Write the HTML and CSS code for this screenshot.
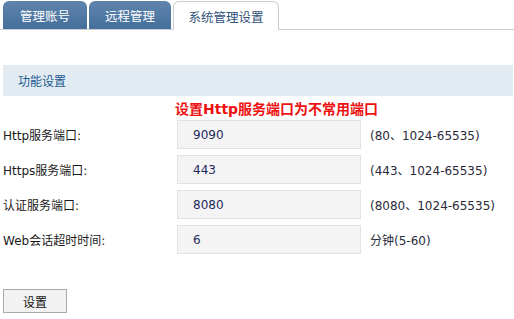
FILE: index.html
```html
<!DOCTYPE html>
<html lang="zh-CN">
<head>
<meta charset="utf-8">
<title>系统管理设置</title>
<link rel="stylesheet" href="styles.css">
</head>
<body>
<div class="tabs">
  <div class="tab">管理账号</div>
  <div class="tab tab-b">远程管理</div>
  <div class="tab tab-active">系统管理设置</div>
</div>
<div class="section-head">功能设置</div>
<div class="notice">设置Http服务端口为不常用端口</div>
<div class="form">
  <div class="row">
    <div class="label">Http服务端口:</div>
    <div class="field">9090</div>
    <div class="hint">(80、1024-65535)</div>
  </div>
  <div class="row">
    <div class="label">Https服务端口:</div>
    <div class="field">443</div>
    <div class="hint">(443、1024-65535)</div>
  </div>
  <div class="row">
    <div class="label">认证服务端口:</div>
    <div class="field">8080</div>
    <div class="hint">(8080、1024-65535)</div>
  </div>
  <div class="row">
    <div class="label">Web会话超时时间:</div>
    <div class="field">6</div>
    <div class="hint">分钟(5-60)</div>
  </div>
</div>
<div class="actions">
  <button class="btn">设置</button>
</div>
</body>
</html>
```

FILE: styles.css
```css
html, body {
  margin: 0;
  padding: 0;
  background: #ffffff;
}
body {
  width: 514px;
  height: 319px;
  overflow: hidden;
  font-family: "DejaVu Sans", "Noto Sans CJK SC", sans-serif;
  font-size: 12px;
  color: #222222;
}
.tabs {
  display: flex;
  align-items: flex-end;
  gap: 2px;
  height: 29px;
  padding-left: 3px;
  border-bottom: 1px solid #cccccc;
}
.tab {
  width: 84px;
  height: 28px;
  box-sizing: border-box;
  border-radius: 6px 6px 0 0;
  background: linear-gradient(#5f84ac, #44709c);
  color: #ffffff;
  font-family: "Noto Sans CJK SC", sans-serif;
  font-size: 12.5px;
  display: flex;
  align-items: center;
  justify-content: center;
}
.tab-b {
  width: 82px;
}
.tab-active {
  width: 106px;
  height: 29px;
  margin-bottom: -1px;
  background: #ffffff;
  border: 1px solid #cccccc;
  border-bottom: none;
  color: #2f5078;
  padding-top: 1px;
}
.section-head {
  margin: 35px 1px 0 3px;
  height: 31px;
  background: #e3ebf2;
  color: #1b5a90;
  font-family: "Noto Sans CJK SC", sans-serif;
  font-size: 12px;
  display: flex;
  align-items: center;
  padding-left: 15px;
}
.notice {
  height: 24px;
  padding-left: 175px;
  color: #ee1111;
  font-family: "DejaVu Sans", "Noto Sans CJK SC", sans-serif;
  font-weight: bold;
  font-size: 14px;
  line-height: 26px;
}
.form {
  display: flex;
  flex-direction: column;
  gap: 6px;
  padding-left: 3px;
}
.row {
  display: flex;
  align-items: center;
  height: 29px;
}
.label {
  width: 174px;
  color: #1a1a1a;
}
.field {
  width: 184px;
  height: 29px;
  box-sizing: border-box;
  background: #f4f4f4;
  border: 1px solid #e2e2e2;
  padding-left: 15px;
  display: flex;
  align-items: center;
  color: #1d2a5c;
}
.hint {
  margin-left: 9px;
  color: #2a2a3a;
}
.actions {
  padding: 35px 0 0 3px;
}
.btn {
  width: 64px;
  height: 24px;
  margin: 0;
  background: #f2f2f2;
  border: 1px solid #aaaaaa;
  border-radius: 0;
  font-family: "Noto Sans CJK SC", sans-serif;
  font-size: 12px;
  color: #111111;
  padding: 0;
}
```
